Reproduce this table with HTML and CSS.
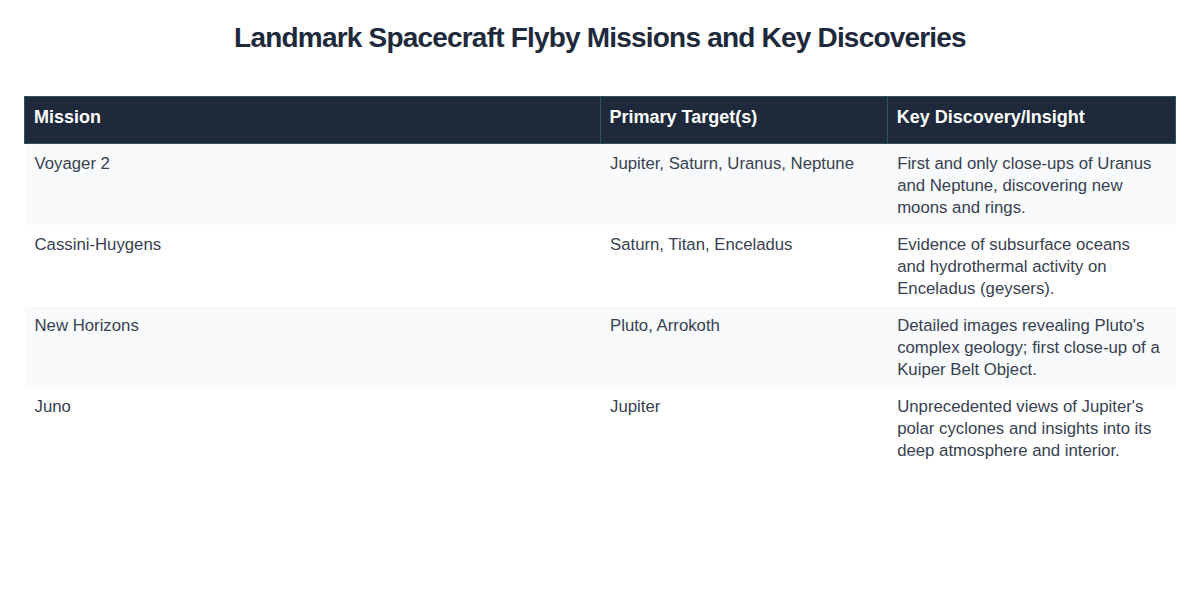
FILE: index.html
```html
<!DOCTYPE html>
<html lang="en">
<head>
<meta charset="utf-8">
<title>Landmark Spacecraft Flyby Missions</title>
<link rel="stylesheet" href="styles.css">
</head>
<body>
<main class="page">
  <h1 class="title">Landmark Spacecraft Flyby Missions and Key Discoveries</h1>
  <table class="missions">
    <colgroup>
      <col class="col-mission">
      <col class="col-target">
      <col class="col-insight">
    </colgroup>
    <thead>
      <tr>
        <th>Mission</th>
        <th>Primary Target(s)</th>
        <th>Key Discovery/Insight</th>
      </tr>
    </thead>
    <tbody>
      <tr>
        <td>Voyager 2</td>
        <td>Jupiter, Saturn, Uranus, Neptune</td>
        <td>First and only close-ups of Uranus and Neptune, discovering new moons and rings.</td>
      </tr>
      <tr>
        <td>Cassini-Huygens</td>
        <td>Saturn, Titan, Enceladus</td>
        <td>Evidence of subsurface oceans and hydrothermal activity on Enceladus (geysers).</td>
      </tr>
      <tr>
        <td>New Horizons</td>
        <td>Pluto, Arrokoth</td>
        <td>Detailed images revealing Pluto's complex geology; first close-up of a Kuiper Belt Object.</td>
      </tr>
      <tr>
        <td>Juno</td>
        <td>Jupiter</td>
        <td>Unprecedented views of Jupiter's polar cyclones and insights into its deep atmosphere and interior.</td>
      </tr>
    </tbody>
  </table>
</main>
</body>
</html>
```
FILE: styles.css
```css
html, body {
  margin: 0;
  padding: 0;
  background: #ffffff;
}
body {
  font-family: "Liberation Sans", Arial, sans-serif;
  color: #334155;
}
.page {
  padding: 20px 24px;
}
.title {
  margin: 0 0 40px 0;
  text-align: center;
  font-size: 28px;
  line-height: 36px;
  font-weight: 700;
  letter-spacing: -0.8px;
  color: #1e293b;
}
.missions {
  width: 100%;
  border-collapse: collapse;
  table-layout: fixed;
}
.col-mission { width: 50%; }
.col-target { width: 24.95%; }
.col-insight { width: 25.05%; }
.missions th {
  background: #1e293b;
  color: #ffffff;
  text-align: left;
  font-size: 18px;
  line-height: 24px;
  font-weight: 700;
  padding: 8px 10px 14px 9px;
  border: 1px solid #34525a;
}
.missions td {
  font-size: 16.75px;
  line-height: 22px;
  padding: 9px 14px 6px 10px;
  vertical-align: top;
  color: #374151;
}
.missions tbody tr:nth-child(odd) {
  background: #f8fafc;
}
.missions tbody tr:nth-child(even) {
  background: #ffffff;
}
```
